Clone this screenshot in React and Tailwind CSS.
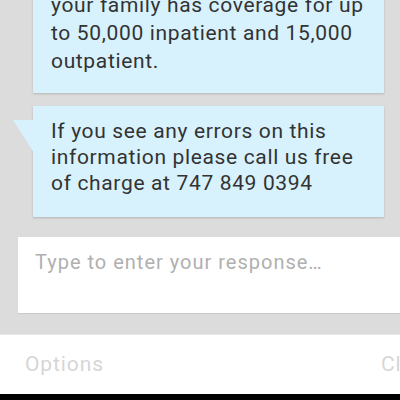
export default function App() {
  return (
    <div
      className="w-[400px] h-[400px] flex flex-col overflow-hidden bg-[#dcdcdc]"
      style={{ fontFamily: "Roboto, 'Noto Sans', sans-serif" }}
    >
      <div className="flex-1 min-h-0 flex flex-col justify-end pb-[20px] gap-[13px]">
        <div className="relative ml-[33px] w-[351px] bg-[#d7f2fd] shadow-[0_1px_2px_rgba(0,0,0,0.18)] pl-[18px] pr-[10px] pt-[12px] pb-[18px] text-[21px] tracking-[0.65px] leading-[28px] text-[#333333] whitespace-nowrap">
          Thank you for confirming. You and
          <br />
          your family has coverage for up
          <br />
          to 50,000 inpatient and 15,000
          <br />
          outpatient.
        </div>
        <div className="relative ml-[33px] w-[351px] bg-[#d7f2fd] shadow-[0_1px_2px_rgba(0,0,0,0.18)] pl-[18px] pr-[10px] pt-[12px] pb-[21px] text-[21px] tracking-[0.65px] leading-[26px] text-[#333333] whitespace-nowrap">
          <svg
            className="absolute left-[-20px] top-[14px]"
            width="20"
            height="32"
            viewBox="0 0 20 32"
          >
            <polygon points="0,0 20.5,0 20.5,32" fill="#d7f2fd" />
          </svg>
          If you see any errors on this
          <br />
          information please call us free
          <br />
          of charge at 747 849 0394
        </div>
      </div>
      <div className="ml-[18px] h-[76px] shrink-0 bg-white shadow-[0_1px_1px_rgba(0,0,0,0.08)] pl-[17px] pt-[13px] text-[20px] tracking-[1px] leading-[24px] text-[#b0b0b0] whitespace-nowrap overflow-hidden">
        Type to enter your response…
      </div>
      <div className="h-[21px] shrink-0" />
      <div className="h-[60px] shrink-0 bg-white flex items-center pl-[25px] overflow-hidden text-[21px] tracking-[0.9px] text-[#d6d6d6] border-t border-[#e6e6e6]">
        <span className="w-[356px] shrink-0">Options</span>
        <span className="shrink-0">Close</span>
      </div>
      <div className="h-[6px] shrink-0 bg-black" />
    </div>
  );
}
